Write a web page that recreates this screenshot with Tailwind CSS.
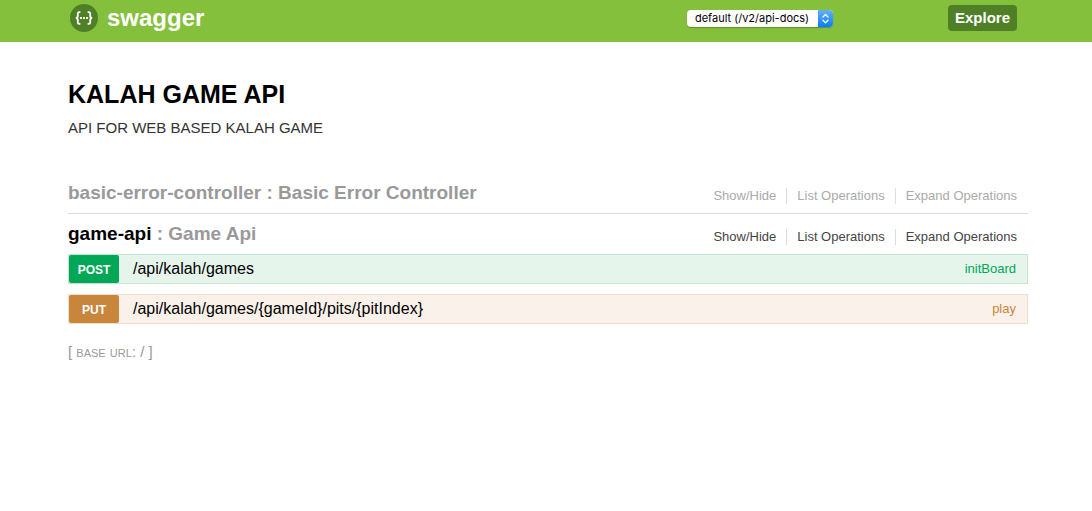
<!DOCTYPE html>
<html lang="en">
<head>
<meta charset="utf-8">
<meta name="viewport" content="width=device-width, initial-scale=1">
<title>Swagger UI</title>
<script src="https://cdn.jsdelivr.net/npm/@tailwindcss/browser@4"></script>
</head>
<body class="bg-white font-['Liberation_Sans',Arial,sans-serif] text-black">
<header class="bg-[#85c03c] pl-1">
  <div class="mx-auto flex h-[42px] max-w-[960px] items-start">
    <a href="#" class="flex items-center gap-[9px] pl-[2px] pt-[3px] text-[24px] leading-[28px] font-bold text-white">
      <svg class="mt-px size-[28px]" viewBox="0 0 28 28" fill="none" aria-hidden="true">
        <circle cx="14" cy="14" r="14" fill="#4f8027"/>
        <path d="M10.4 8.2H9.4Q7.8 8.2 7.8 9.8V12Q7.8 14 5.8 14Q7.8 14 7.8 16V18.2Q7.8 19.8 9.4 19.8H10.4M17.6 8.2H18.6Q20.2 8.2 20.2 9.8V12Q20.2 14 22.2 14Q20.2 14 20.2 16V18.2Q20.2 19.8 18.6 19.8H17.6" stroke="#fff" stroke-width="1.8"/>
        <path d="M10.1 13.1h1.8v1.8h-1.8zM13.1 13.1h1.8v1.8h-1.8zM16.1 13.1h1.8v1.8h-1.8z" fill="#fff"/>
      </svg>
      <span>swagger</span>
    </a>
    <form class="ml-auto flex items-start pr-[11px]">
      <div class="relative mt-[10px] mr-[115px]">
        <select aria-label="API definition" class="block h-[17px] w-[146px] appearance-none rounded-[4px] bg-white pl-[8px] font-[Inter,sans-serif] text-[11px] leading-[17px] text-black shadow-[0_1px_1px_rgba(0,0,0,0.25)]">
          <option>default (/v2/api-docs)</option>
        </select>
        <svg class="pointer-events-none absolute top-0 right-0 h-[17px] w-[15px]" viewBox="0 0 15 17" fill="none" aria-hidden="true">
          <defs><linearGradient id="b" x1="0" y1="0" x2="0" y2="1"><stop stop-color="#67b0f8"/><stop offset="1" stop-color="#087dff"/></linearGradient></defs>
          <path d="M0 0h11a4 4 0 0 1 4 4v9a4 4 0 0 1-4 4H0z" fill="url(#b)"/>
          <path d="M5 7l2.5-2.6L10 7M5 10.2l2.5 2.6L10 10.2" stroke="#fff" stroke-width="1.3" stroke-linecap="round" stroke-linejoin="round"/>
        </svg>
      </div>
      <button type="button" class="mt-[5px] h-[26px] rounded-[4px] bg-[#4f8027] px-[7px] text-[15px] leading-[26px] font-bold text-white">Explore</button>
    </form>
  </div>
</header>
<main class="pl-1">
  <div class="mx-auto max-w-[960px] pt-[36px]">
    <h1 class="text-[25px] leading-[32px] font-bold">KALAH GAME API</h1>
    <p class="mt-[8px] text-[15px] leading-[20px] text-[#333]">API FOR WEB BASED KALAH GAME</p>
    <ul class="mt-[35px]">
      <li class="flex h-[41px] items-start justify-between border-b border-[#ddd]">
        <h2 class="pt-[8px] text-[19px] leading-[24px] font-bold text-[#999]"><a href="#">basic-error-controller</a> : Basic Error Controller</h2>
        <ul class="mt-[15px] mr-px flex text-[13px] leading-[16px] text-[#aaa]">
          <li class="border-r border-[#ddd] px-[10px]"><a href="#">Show/Hide</a></li>
          <li class="border-r border-[#ddd] px-[10px]"><a href="#">List Operations</a></li>
          <li class="px-[10px]"><a href="#">Expand Operations</a></li>
        </ul>
      </li>
      <li>
        <div class="flex h-[40px] items-start justify-between">
          <h2 class="pt-[8px] text-[19px] leading-[24px] font-bold text-[#999]"><a href="#" class="text-black">game-api</a> : Game Api</h2>
          <ul class="mt-[15px] mr-px flex text-[13px] leading-[16px] text-[#444]">
            <li class="border-r border-[#ddd] px-[10px]"><a href="#">Show/Hide</a></li>
            <li class="border-r border-[#ddd] px-[10px]"><a href="#">List Operations</a></li>
            <li class="px-[10px]"><a href="#">Expand Operations</a></li>
          </ul>
        </div>
        <ul class="flex flex-col gap-[10px]">
          <li class="flex h-[30px] items-center border border-[#c3e8d1] bg-[#e5f5eb] pr-[11px]">
            <a href="#" class="h-[28px] w-[50px] rounded-[2px] bg-[#00a757] pt-px text-center text-[12px] leading-[28px] font-bold text-white">POST</a>
            <a href="#" class="pl-[14px] text-[16px] leading-[28px]">/api/kalah/games</a>
            <a href="#" class="ml-auto text-[13px] leading-[28px] text-[#00a757]">initBoard</a>
          </li>
          <li class="flex h-[30px] items-center border border-[#f0e0ca] bg-[#f9f1ea] pr-[11px]">
            <a href="#" class="h-[28px] w-[50px] rounded-[2px] bg-[#c8863c] pt-px text-center text-[12px] leading-[28px] font-bold text-white">PUT</a>
            <a href="#" class="pl-[14px] text-[16px] leading-[28px]">/api/kalah/games/{gameId}/pits/{pitIndex}</a>
            <a href="#" class="ml-auto text-[13px] leading-[28px] text-[#c8863c]">play</a>
          </li>
        </ul>
      </li>
    </ul>
    <footer class="mt-[18px] text-[15px] leading-[20px] text-[#999]">[ <span class="[font-variant:small-caps]">base url</span>: / ]</footer>
  </div>
</main>
</body>
</html>
